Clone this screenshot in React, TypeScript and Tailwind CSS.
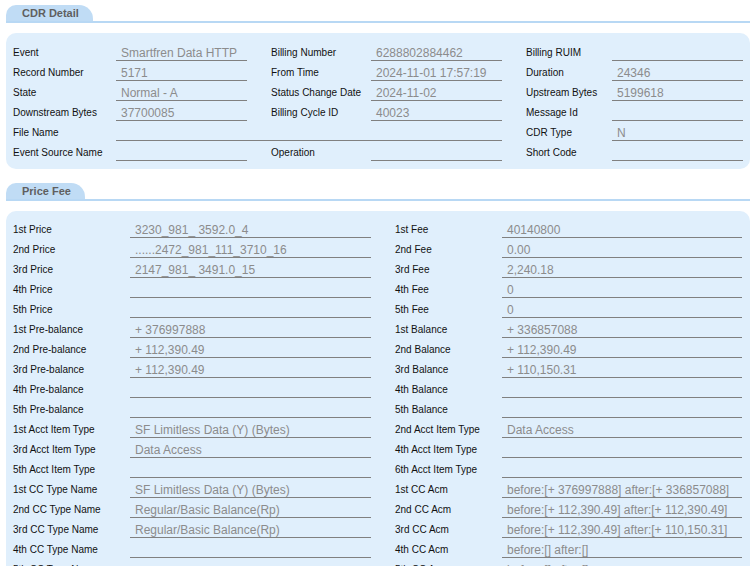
import { Fragment } from 'react';

type Cell = { label: string; value: string };

// CDR detail rows: three label/value pairs per row, "File Name" stretches over two columns
const cdrRows: (Cell | null)[][] = [
    [
        { label: 'Event', value: 'Smartfren Data HTTP' },
        { label: 'Billing Number', value: '6288802884462' },
        { label: 'Billing RUIM', value: '' },
    ],
    [
        { label: 'Record Number', value: '5171' },
        { label: 'From Time', value: '2024-11-01 17:57:19' },
        { label: 'Duration', value: '24346' },
    ],
    [
        { label: 'State', value: 'Normal - A' },
        { label: 'Status Change Date', value: '2024-11-02' },
        { label: 'Upstream Bytes', value: '5199618' },
    ],
    [
        { label: 'Downstream Bytes', value: '37700085' },
        { label: 'Billing Cycle ID', value: '40023' },
        { label: 'Message Id', value: '' },
    ],
    [
        { label: 'File Name', value: '' },
        null,
        { label: 'CDR Type', value: 'N' },
    ],
    [
        { label: 'Event Source Name', value: '' },
        { label: 'Operation', value: '' },
        { label: 'Short Code', value: '' },
    ],
];

const priceRows: [Cell, Cell][] = [
    [{ label: '1st Price', value: '3230_981_ 3592.0_4' }, { label: '1st Fee', value: '40140800' }],
    [{ label: '2nd Price', value: '......2472_981_111_3710_16' }, { label: '2nd Fee', value: '0.00' }],
    [{ label: '3rd Price', value: '2147_981_ 3491.0_15' }, { label: '3rd Fee', value: '2,240.18' }],
    [{ label: '4th Price', value: '' }, { label: '4th Fee', value: '0' }],
    [{ label: '5th Price', value: '' }, { label: '5th Fee', value: '0' }],
    [{ label: '1st Pre-balance', value: '+ 376997888' }, { label: '1st Balance', value: '+ 336857088' }],
    [{ label: '2nd Pre-balance', value: '+ 112,390.49' }, { label: '2nd Balance', value: '+ 112,390.49' }],
    [{ label: '3rd Pre-balance', value: '+ 112,390.49' }, { label: '3rd Balance', value: '+ 110,150.31' }],
    [{ label: '4th Pre-balance', value: '' }, { label: '4th Balance', value: '' }],
    [{ label: '5th Pre-balance', value: '' }, { label: '5th Balance', value: '' }],
    [{ label: '1st Acct Item Type', value: 'SF Limitless Data (Y) (Bytes)' }, { label: '2nd Acct Item Type', value: 'Data Access' }],
    [{ label: '3rd Acct Item Type', value: 'Data Access' }, { label: '4th Acct Item Type', value: '' }],
    [{ label: '5th Acct Item Type', value: '' }, { label: '6th Acct Item Type', value: '' }],
    [{ label: '1st CC Type Name', value: 'SF Limitless Data (Y) (Bytes)' }, { label: '1st CC Acm', value: 'before:[+ 376997888] after:[+ 336857088]' }],
    [{ label: '2nd CC Type Name', value: 'Regular/Basic Balance(Rp)' }, { label: '2nd CC Acm', value: 'before:[+ 112,390.49] after:[+ 112,390.49]' }],
    [{ label: '3rd CC Type Name', value: 'Regular/Basic Balance(Rp)' }, { label: '3rd CC Acm', value: 'before:[+ 112,390.49] after:[+ 110,150.31]' }],
    [{ label: '4th CC Type Name', value: '' }, { label: '4th CC Acm', value: 'before:[] after:[]' }],
    [{ label: '5th CC Type Name', value: '' }, { label: '5th CC Acm', value: 'before:[] after:[]' }],
];

function Label({ text }: { text: string }) {
    return <div className="h-5 pt-[3px] text-[10px] leading-[17px] text-[#111] whitespace-nowrap">{text}</div>;
}

function Value({ text, className = '' }: { text: string; className?: string }) {
    return (
        <div className={`h-5 flex items-end border-b border-[#808080] pl-[5px] text-[12px] leading-[14px] text-[#8c8c8c] whitespace-nowrap overflow-hidden ${className}`}>
            {text}
        </div>
    );
}

function SectionTab({ title, width }: { title: string; width: string }) {
    return (
        <div>
            <div className={`${width} h-4 rounded-tl-[10px] rounded-tr-[14px] bg-[#c0dcf5] pl-4 text-[11px] font-bold leading-4 text-[#5f5f5f]`}>
                {title}
            </div>
            <div className="h-[2px] bg-[#b8d8f4]"></div>
        </div>
    );
}

function App() {
    return (
        <div className="w-[756px] bg-white px-[6px] pt-[5px] font-['Liberation_Sans',Arial,sans-serif]">
            <SectionTab title="CDR Detail" width="w-[87px]" />
            <div className="mt-[10px] rounded-[10px] bg-[#e0effc] pl-[7px] py-2">
                <div className="grid grid-cols-[103px_131px_24px_100px_131px_24px_86px_131px]">
                    {cdrRows.map((row, i) => {
                        const [a, b, c] = row;
                        return (
                            <Fragment key={i}>
                                <Label text={a!.label} />
                                {b ? (
                                    <>
                                        <Value text={a!.value} />
                                        <div></div>
                                        <Label text={b.label} />
                                        <Value text={b.value} />
                                    </>
                                ) : (
                                    <Value text={a!.value} className="col-span-4" />
                                )}
                                <div></div>
                                <Label text={c!.label} />
                                <Value text={c!.value} />
                            </Fragment>
                        );
                    })}
                </div>
            </div>

            <div className="mt-[14px]">
                <SectionTab title="Price Fee" width="w-[79px]" />
            </div>
            <div className="mt-[10px] rounded-[10px] bg-[#e0effc] pl-[7px] py-[7px]">
                <div className="grid grid-cols-[117px_241px_24px_107px_240px]">
                    {priceRows.map(([left, right], i) => (
                        <Fragment key={i}>
                            <Label text={left.label} />
                            <Value text={left.value} />
                            <div></div>
                            <Label text={right.label} />
                            <Value text={right.value} />
                        </Fragment>
                    ))}
                </div>
            </div>
        </div>
    );
}

export default App;
